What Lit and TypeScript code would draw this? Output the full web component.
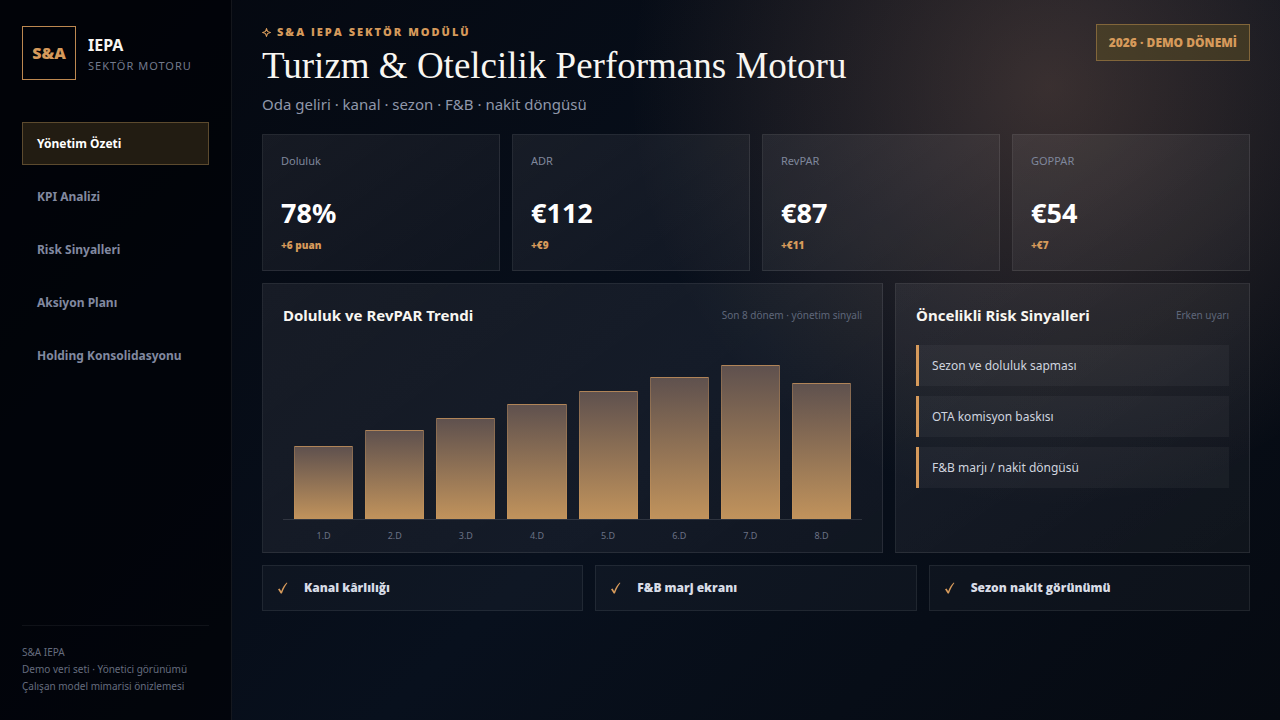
import { LitElement, html, css } from "lit";
import { customElement } from "lit/decorators.js";

const NAV = ["Yönetim Özeti", "KPI Analizi", "Risk Sinyalleri", "Aksiyon Planı", "Holding Konsolidasyonu"];
const KPIS = [
  { label: "Doluluk", value: "78%", delta: "+6 puan" },
  { label: "ADR", value: "€112", delta: "+€9" },
  { label: "RevPAR", value: "€87", delta: "+€11" },
  { label: "GOPPAR", value: "€54", delta: "+€7" },
];
const BARS = [42, 51, 58, 66, 73, 81, 88, 78];
const RISKS = ["Sezon ve doluluk sapması", "OTA komisyon baskısı", "F&B marjı / nakit döngüsü"];
const CHECKS = ["Kanal kârlılığı", "F&B marj ekranı", "Sezon nakit görünümü"];

@customElement("app-root")
export class AppRoot extends LitElement {
  static styles = css`
    :host {
      display: grid;
      grid-template-columns: 232px minmax(0, 1fr);
      min-height: 100vh;
      font-family: "Segoe UI", "Noto Sans", "Open Sans", sans-serif;
      color: #f8f6f1;
      background:
        radial-gradient(circle at 82% 12%, rgba(214, 148, 110, 0.24), transparent 420px),
        linear-gradient(135deg, #04070e 0%, #08101d 55%, #060a11 100%);
    }
    * { box-sizing: border-box; }
    h1, h2, p, ul { margin: 0; padding: 0; }
    ul { list-style: none; }

    .side {
      display: flex;
      flex-direction: column;
      padding: 26px 22px 25px;
      background: rgba(0, 1, 6, 0.7);
      border-right: 1px solid rgba(255, 255, 255, 0.08);
    }
    .brand { display: flex; align-items: center; gap: 12px; }
    .mark {
      display: grid;
      place-items: center;
      width: 54px;
      height: 54px;
      border: 1px solid #bd8850;
      color: #d69a5b;
      font-family: "Open Sans", "Noto Sans", sans-serif;
      font-size: 16px;
      font-weight: 800;
    }
    .name { margin-top: 3px; font-size: 16px; line-height: 22px; font-weight: 700; }
    .sub { font-size: 11px; line-height: 20px; letter-spacing: 1px; color: #737a8c; }
    .nav { display: grid; gap: 10px; margin-top: 42px; }
    .nav a {
      padding: 12px 14px;
      border: 1px solid transparent;
      font-size: 12px;
      line-height: 17px;
      font-weight: 700;
      color: #8189a0;
      text-decoration: none;
    }
    .nav .active {
      color: #fff;
      background: #221c12;
      border-color: #5c4a2e;
    }
    .foot {
      margin-top: auto;
      padding-top: 18px;
      border-top: 1px solid rgba(255, 255, 255, 0.06);
      font-size: 10px;
      line-height: 17px;
      color: #656c7e;
    }

    .main { padding: 24px 30px; min-width: 0; }
    .head { display: flex; justify-content: space-between; align-items: flex-start; }
    .eyebrow {
      display: flex;
      align-items: center;
      gap: 6px;
      font-family: "Open Sans", "Noto Sans", sans-serif;
      font-size: 11px;
      line-height: 16px;
      font-weight: 800;
      letter-spacing: 2px;
      color: #d69a5b;
    }
    .spark { width: 9px; height: 9px; fill: none; stroke: currentColor; stroke-width: 1.2; }
    h1 {
      font-family: Georgia, "Liberation Serif", serif;
      font-size: 37px;
      line-height: 52px;
      font-weight: 400;
    }
    .lead { font-size: 15px; line-height: 22px; margin-top: 1px; color: #9097aa; }
    .period {
      padding: 9px 12px;
      border: 1px solid #82663a;
      background: rgba(90, 76, 36, 0.55);
      font-family: "Open Sans", "Noto Sans", sans-serif;
      font-size: 12px;
      line-height: 17px;
      font-weight: 800;
      color: #d69a5b;
    }

    .card {
      border: 1px solid rgba(255, 255, 255, 0.08);
      background: linear-gradient(145deg, rgba(255, 255, 255, 0.065), rgba(255, 255, 255, 0.035));
    }
    .kpis { display: grid; grid-template-columns: repeat(4, 1fr); gap: 12px; margin-top: 19px; }
    .kpi { padding: 17px 18px 16px; }
    .kpi-label { font-size: 11px; line-height: 18px; color: #7f879b; }
    .kpi-value { margin-top: 26px; font-size: 27px; line-height: 34px; font-weight: 700; color: #fff; }
    .kpi-delta {
      margin-top: 6px;
      font-family: "Open Sans", "Noto Sans", sans-serif;
      font-size: 10px;
      line-height: 18px;
      font-weight: 800;
      color: #d69a5b;
    }

    .mid { display: grid; grid-template-columns: 7fr 4fr; gap: 12px; margin-top: 12px; }
    .panel { padding: 19px 20px; min-width: 0; }
    .panel-head { display: flex; justify-content: space-between; align-items: center; }
    h2 { font-size: 15px; line-height: 24px; font-weight: 700; }
    .note { font-size: 10px; line-height: 16px; color: #5f677a; }
    .chart {
      display: grid;
      grid-template-columns: repeat(8, 1fr);
      gap: 12px;
      align-items: end;
      height: 176px;
      margin-top: 17px;
      padding: 0 11px;
      border-bottom: 1px solid rgba(255, 255, 255, 0.12);
    }
    .bar {
      border: 1px solid rgba(214, 154, 91, 0.3);
      border-top-color: #b08458;
      border-bottom: 0;
      background: linear-gradient(180deg, #5f514e, #c1935c);
    }
    .ticks {
      display: grid;
      grid-template-columns: repeat(8, 1fr);
      gap: 12px;
      padding: 8px 11px 0;
      font-size: 9px;
      line-height: 16px;
      text-align: center;
      color: #6b7285;
    }
    .trend { padding-bottom: 8px; }
    .risks { display: grid; gap: 10px; margin-top: 18px; }
    .risks li {
      padding: 12px 13px;
      border-left: 3px solid #d69a5b;
      background: rgba(255, 255, 255, 0.04);
      font-size: 12px;
      line-height: 17px;
      color: #cfd4df;
    }

    .checks { display: grid; grid-template-columns: repeat(3, 1fr); gap: 12px; margin-top: 12px; }
    .checks li {
      display: flex;
      align-items: center;
      gap: 16px;
      padding: 14px;
      border: 1px solid rgba(255, 255, 255, 0.08);
      background: rgba(255, 255, 255, 0.03);
      font-family: "Open Sans", "Noto Sans", sans-serif;
      font-size: 12px;
      line-height: 16px;
      font-weight: 800;
      color: #d8dce6;
    }
    .tick { width: 11px; height: 12px; fill: #d69a5b; }
  `;

  render() {
    return html`
      <aside class="side">
        <div class="brand">
          <div class="mark">S&amp;A</div>
          <div>
            <div class="name">IEPA</div>
            <div class="sub">SEKTÖR MOTORU</div>
          </div>
        </div>
        <nav class="nav">
          ${NAV.map((n, i) => html`<a href="#" class=${i === 0 ? "active" : ""}>${n}</a>`)}
        </nav>
        <div class="foot">
          <p>S&amp;A IEPA</p>
          <p>Demo veri seti · Yönetici görünümü</p>
          <p>Çalışan model mimarisi önizlemesi</p>
        </div>
      </aside>
      <main class="main">
        <header class="head">
          <div>
            <div class="eyebrow">
              <svg class="spark" viewBox="0 0 10 10"><path d="M5 .8 6.2 3.8 9.2 5 6.2 6.2 5 9.2 3.8 6.2.8 5 3.8 3.8Z" /></svg>
              <span>S&amp;A IEPA SEKTÖR MODÜLÜ</span>
            </div>
            <h1>Turizm &amp; Otelcilik Performans Motoru</h1>
            <p class="lead">Oda geliri · kanal · sezon · F&amp;B · nakit döngüsü</p>
          </div>
          <div class="period">2026 · DEMO DÖNEMİ</div>
        </header>
        <section class="kpis">
          ${KPIS.map(
            (k) => html`<article class="card kpi">
              <div class="kpi-label">${k.label}</div>
              <div class="kpi-value">${k.value}</div>
              <div class="kpi-delta">${k.delta}</div>
            </article>`
          )}
        </section>
        <section class="mid">
          <article class="card panel trend">
            <div class="panel-head">
              <h2>Doluluk ve RevPAR Trendi</h2>
              <span class="note">Son 8 dönem · yönetim sinyali</span>
            </div>
            <div class="chart">${BARS.map((b) => html`<div class="bar" style="height:${b}%"></div>`)}</div>
            <div class="ticks">${BARS.map((_, i) => html`<span>${i + 1}.D</span>`)}</div>
          </article>
          <article class="card panel">
            <div class="panel-head">
              <h2>Öncelikli Risk Sinyalleri</h2>
              <span class="note">Erken uyarı</span>
            </div>
            <ul class="risks">${RISKS.map((r) => html`<li>${r}</li>`)}</ul>
          </article>
        </section>
        <ul class="checks">
          ${CHECKS.map(
            (c) => html`<li>
              <svg class="tick" viewBox="0 0 11 12"><path d="M1 7.2 2.6 6.4 4.2 9.2C5.6 5.6 7.4 2.8 9.8.6L10.4 1C8.2 4 6.4 7.4 4.9 11.4L3.7 11.6Z" /></svg>
              <span>${c}</span>
            </li>`
          )}
        </ul>
      </main>
    `;
  }
}
